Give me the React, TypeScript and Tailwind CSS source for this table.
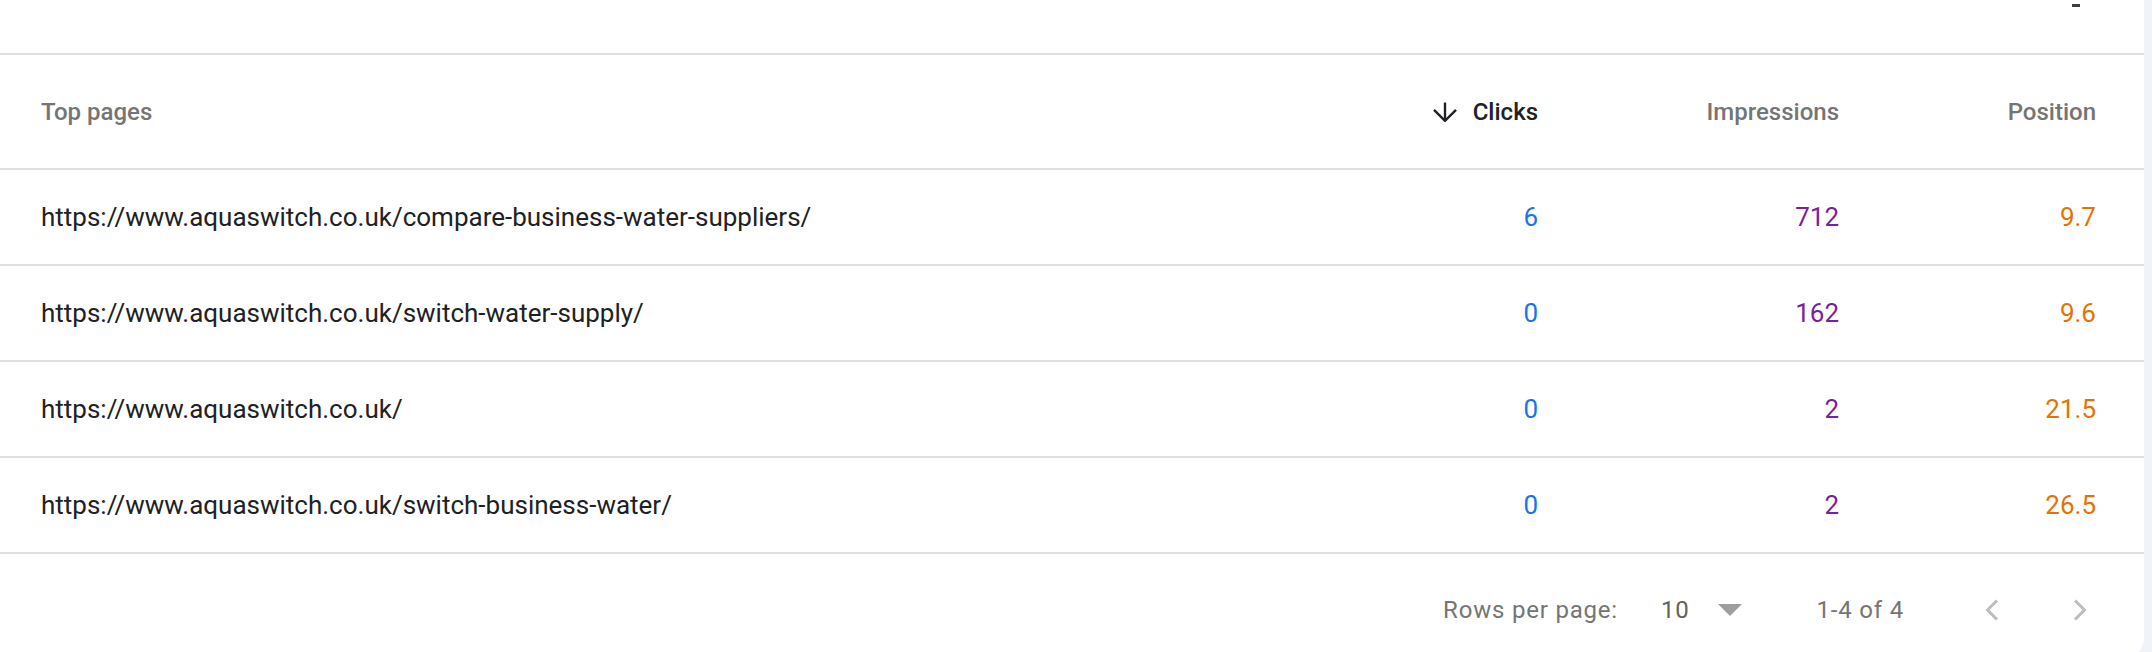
import React from "react";

type PageRow = {
  url: string;
  clicks: number;
  impressions: number;
  position: string;
};

const rows: PageRow[] = [
  { url: "https://www.aquaswitch.co.uk/compare-business-water-suppliers/", clicks: 6, impressions: 712, position: "9.7" },
  { url: "https://www.aquaswitch.co.uk/switch-water-supply/", clicks: 0, impressions: 162, position: "9.6" },
  { url: "https://www.aquaswitch.co.uk/", clicks: 0, impressions: 2, position: "21.5" },
  { url: "https://www.aquaswitch.co.uk/switch-business-water/", clicks: 0, impressions: 2, position: "26.5" },
];

const cols = "grid grid-cols-[1fr_300px_301px_257px] items-center pl-[41px] pr-[48px]";

const ArrowDownIcon = () => (
  <svg width="24" height="20" viewBox="0 0 24 20" fill="none" stroke="#202124" strokeWidth="2.4">
    <path d="M12 0.5V18.5" />
    <path d="M1 7.8L12 18.8L23 7.8" />
  </svg>
);

const Chevron = ({ dir }: { dir: "left" | "right" }) => (
  <svg width="16" height="22" viewBox="0 0 16 22" fill="none" stroke="#bdbdbd" strokeWidth="3">
    {dir === "left" ? <path d="M13 1.5L3.5 11L13 20.5" /> : <path d="M3 1.5L12.5 11L3 20.5" />}
  </svg>
);

export default function App() {
  return (
    <div className="w-full h-[652px] overflow-hidden bg-[#f0f4f9] font-['Roboto',sans-serif]">
      <div className="w-[2144px] h-[662px] bg-white rounded-br-[26px] flex flex-col">
        <div className="h-[55px] shrink-0 flex justify-end pr-[64px] pt-[4px] border-b-2 border-[#e0e0e0]">
          <span className="block w-[8px] h-[3px] bg-[#3c4043]" />
        </div>

        <div className={`${cols} h-[115px] shrink-0 border-b-2 border-[#e0e0e0] text-[24px] font-medium text-[#757575]`}>
          <div>Top pages</div>
          <div className="flex items-center justify-end gap-[16px] text-[#202124]">
            <ArrowDownIcon />
            <span>Clicks</span>
          </div>
          <div className="text-right">Impressions</div>
          <div className="text-right">Position</div>
        </div>

        {rows.map((r) => (
          <div key={r.url} className={`${cols} h-[96px] shrink-0 border-b-2 border-[#e0e0e0] text-[26px]`}>
            <div className="text-[#202124]">{r.url}</div>
            <div className="text-right text-[#1a73e8]">{r.clicks}</div>
            <div className="text-right text-[#7b1fa2]">{r.impressions}</div>
            <div className="text-right text-[#e37400]">{r.position}</div>
          </div>
        ))}

        <div className="h-[106px] shrink-0 flex items-center justify-end pt-[6px] pr-[56px] text-[24px] tracking-[0.8px] text-[#757575]">
          <span>Rows per page:</span>
          <span className="ml-[43px] text-[#616161]">10</span>
          <span className="ml-[28px] w-0 h-0 border-l-[12px] border-r-[12px] border-t-[12px] border-l-transparent border-r-transparent border-t-[#9e9e9e]" />
          <span className="ml-[75px]">1-4 of 4</span>
          <span className="ml-[80px] flex"><Chevron dir="left" /></span>
          <span className="ml-[72px] flex"><Chevron dir="right" /></span>
        </div>
      </div>
    </div>
  );
}
